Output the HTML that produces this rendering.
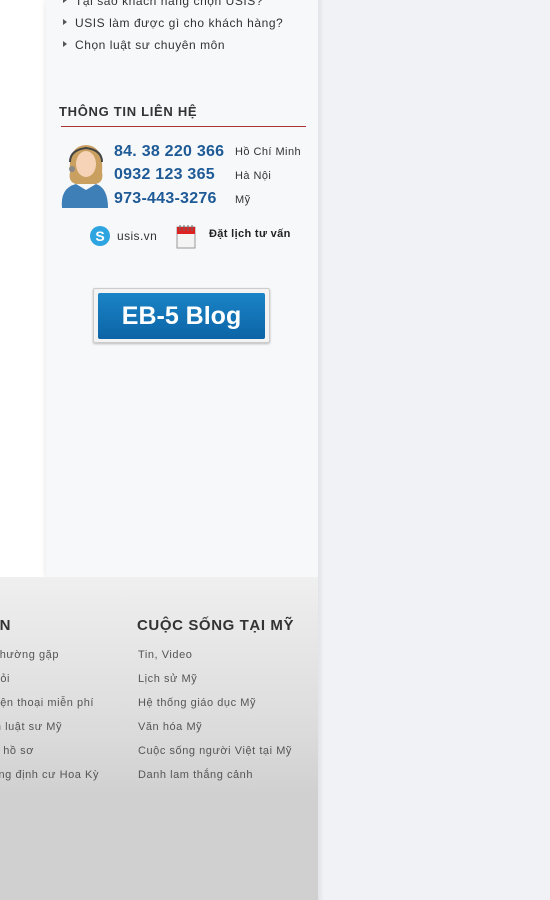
<!DOCTYPE html>
<html><head><meta charset="utf-8"><style>
*{margin:0;padding:0;box-sizing:border-box}
body{width:550px;height:900px;overflow:hidden;background:#f1f2f6;font-family:"Liberation Sans",Arial,sans-serif;position:relative}
.left{position:absolute;left:0;top:0;width:46px;height:577px;background:#fff}
.side{position:absolute;left:46px;top:0;width:272px;height:577px;background:#f7f8fa;box-shadow:0 0 6px rgba(0,0,0,.12)}
.rshadow{position:absolute;left:318px;top:0;width:6px;height:900px;background:linear-gradient(90deg,#e2e3e7,#f1f2f6)}
.a{position:absolute;font-size:12px;color:#333;white-space:nowrap;letter-spacing:.55px}
.a:before{content:"";position:absolute;left:-12px;top:3px;border-left:4px solid #555;border-top:3.5px solid transparent;border-bottom:3.5px solid transparent}
.h{position:absolute;left:59px;top:104px;font-size:13px;font-weight:bold;color:#333;letter-spacing:.7px}
.line{position:absolute;left:61px;top:126px;width:245px;height:1px;background:#a33}
.ph{position:absolute;left:114px;font-size:16px;font-weight:bold;color:#1d5a96;white-space:nowrap;letter-spacing:.25px}
.city{position:absolute;left:235px;font-size:11px;color:#333;white-space:nowrap;letter-spacing:.45px}
.btn{position:absolute;left:93px;top:288px;width:177px;height:55px;background:#f3f3f3;border:1px solid #ccc;border-radius:2px;box-shadow:0 1px 2px rgba(0,0,0,.25)}
.btn div{position:absolute;left:4px;top:4px;width:167px;height:46px;background:linear-gradient(#1a84c6,#0c64a6);border-radius:2px;color:#fff;font-weight:bold;font-size:25px;text-align:center;line-height:46px}
.foot{position:absolute;left:0;top:577px;width:318px;height:323px;overflow:hidden;background:linear-gradient(#efefef 0,#dcdcdc 150px,#d0d0d0 220px,#d0d0d0)}
.fh{position:absolute;font-size:15px;font-weight:bold;color:#333;white-space:nowrap;letter-spacing:.6px}
.fl{position:absolute;font-size:11px;color:#555;white-space:nowrap;letter-spacing:.55px}
</style></head><body>
<div class="left"></div>
<div class="side"></div>
<div class="rshadow"></div>
<div class="a" style="left:75px;top:-6px">Tại sao khách hàng chọn USIS?</div>
<div class="a" style="left:75px;top:16px">USIS làm được gì cho khách hàng?</div>
<div class="a" style="left:75px;top:38px">Chọn luật sư chuyên môn</div>
<div class="h">THÔNG TIN LIÊN HỆ</div>
<div class="line"></div>
<svg style="position:absolute;left:60px;top:142px" width="50" height="68" viewBox="0 0 50 68">
<path d="M10 30 Q8 4 26 3 Q44 4 42 30 Q44 40 36 42 L16 42 Q8 40 10 30Z" fill="#c9a060"/>
<ellipse cx="26" cy="22" rx="10" ry="13" fill="#f6d2b6"/>
<path d="M2 66 Q0 46 16 42 L26 48 L36 42 Q48 46 48 66Z" fill="#3f7fb8"/>
<path d="M10 20 Q10 8 26 6 Q42 8 42 20" stroke="#444" stroke-width="2" fill="none"/>
<circle cx="12" cy="27" r="3" fill="#888"/>
</svg>
<div class="ph" style="top:143px">84. 38 220 366</div>
<div class="ph" style="top:166px">0932 123 365</div>
<div class="ph" style="top:190px">973-443-3276</div>
<div class="city" style="top:146px">Hồ Chí Minh</div>
<div class="city" style="top:170px">Hà Nội</div>
<div class="city" style="top:194px">Mỹ</div>
<svg style="position:absolute;left:89px;top:225px" width="22" height="22" viewBox="0 0 22 22"><circle cx="11" cy="11" r="10" fill="#2ea4e0"/><text x="11" y="16" font-size="14" font-weight="bold" fill="#fff" text-anchor="middle" font-family="Liberation Sans">S</text></svg>
<div style="position:absolute;left:117px;top:229px;font-size:12px;color:#333;letter-spacing:.4px">usis.vn</div>
<svg style="position:absolute;left:175px;top:222px" width="22" height="27" viewBox="0 0 22 27"><rect x="2" y="5" width="18" height="21" fill="#f4f4f4" stroke="#999"/><rect x="2" y="5" width="18" height="7" fill="#d22"/><path d="M5 3v6M9 3v6M13 3v6M17 3v6" stroke="#666"/></svg>
<div style="position:absolute;left:209px;top:228px;font-size:11px;font-weight:bold;color:#222;letter-spacing:.35px">Đặt lịch tư vấn</div>
<div class="btn"><div>EB-5 Blog</div></div>
<div class="foot">
<div class="fh" style="right:307px;top:40px">TƯ VẤN</div>
<div class="fh" style="left:137px;top:40px">CUỘC SỐNG TẠI MỸ</div>
<div class="fl" style="right:259px;top:72px">Câu hỏi thường gặp</div>
<div class="fl" style="right:308px;top:96px">Hỏi đáp hỏi</div>
<div class="fl" style="right:224px;top:120px">Tư vấn điện thoại miễn phí</div>
<div class="fl" style="right:256px;top:144px">Chọn luật sư Mỹ</div>
<div class="fl" style="right:284px;top:168px">Nộp hồ sơ</div>
<div class="fl" style="right:219px;top:192px">Cẩm nang định cư Hoa Kỳ</div>
<div class="fl" style="left:138px;top:72px">Tin, Video</div>
<div class="fl" style="left:138px;top:96px">Lịch sử Mỹ</div>
<div class="fl" style="left:138px;top:120px">Hệ thống giáo dục Mỹ</div>
<div class="fl" style="left:138px;top:144px">Văn hóa Mỹ</div>
<div class="fl" style="left:138px;top:168px">Cuộc sống người Việt tại Mỹ</div>
<div class="fl" style="left:138px;top:192px">Danh lam thắng cảnh</div>
</div>
</body></html>
